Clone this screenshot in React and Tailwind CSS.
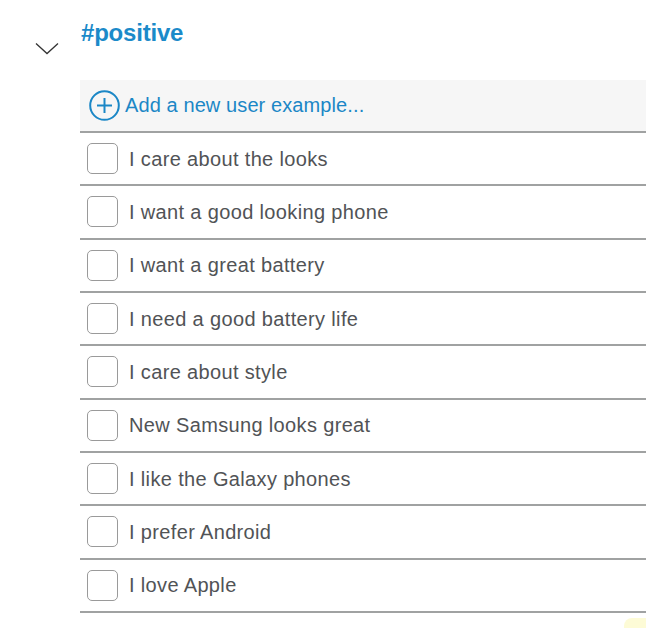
import React from 'react';

const EXAMPLES = [
  'I care about the looks',
  'I want a good looking phone',
  'I want a great battery',
  'I need a good battery life',
  'I care about style',
  'New Samsung looks great',
  'I like the Galaxy phones',
  'I prefer Android',
  'I love Apple',
];

export default function App() {
  return (
    <div className="relative w-[646px] h-[628px] overflow-hidden bg-white font-['Liberation_Sans',Arial,sans-serif]">
      <div className="flex">
        {/* chevron column */}
        <div className="w-[80px] shrink-0 pt-[42px] pl-[35px]">
          <svg width="24" height="13" viewBox="0 0 24 13" fill="none">
            <path d="M1 1.5 L12 11.5 L23 1.5" stroke="#333" strokeWidth="1.3" />
          </svg>
        </div>

        <div className="flex-1">
          <h2 className="pt-[19px] h-[80px] pl-px text-[24px] leading-[28px] font-semibold text-[#1b8ac9] tracking-[-0.2px]">
            #positive
          </h2>

          <button className="flex items-center w-full h-[53px] bg-[#f6f6f6] border-b-2 border-[#a0a2a2] pl-[9px] pb-px text-[#1b87c6] text-[20px]">
            <svg width="31" height="31" viewBox="0 0 31 31" fill="none">
              <circle cx="15.5" cy="15.5" r="14.3" stroke="#1b87c6" strokeWidth="2" />
              <path d="M15.5 8 V23 M8 15.5 H23" stroke="#1b87c6" strokeWidth="2" />
            </svg>
            <span className="ml-[5px] tracking-[0.1px]">Add a new user example...</span>
          </button>

          {EXAMPLES.map((text) => (
            <div key={text} className="flex items-center h-[53.33px] border-b-2 border-[#a0a2a2] pl-[7px]">
              <div className="w-[31px] h-[31px] rounded-[5px] border border-[#9a9a9a] bg-white shrink-0" />
              <span className="ml-[11px] text-[20px] text-[#515356] tracking-[0.35px]">{text}</span>
            </div>
          ))}
        </div>
      </div>

      <div className="absolute left-[624px] top-[618px] w-[30px] h-[20px] rounded-[8px] bg-[#fdfbd6]" />
    </div>
  );
}
